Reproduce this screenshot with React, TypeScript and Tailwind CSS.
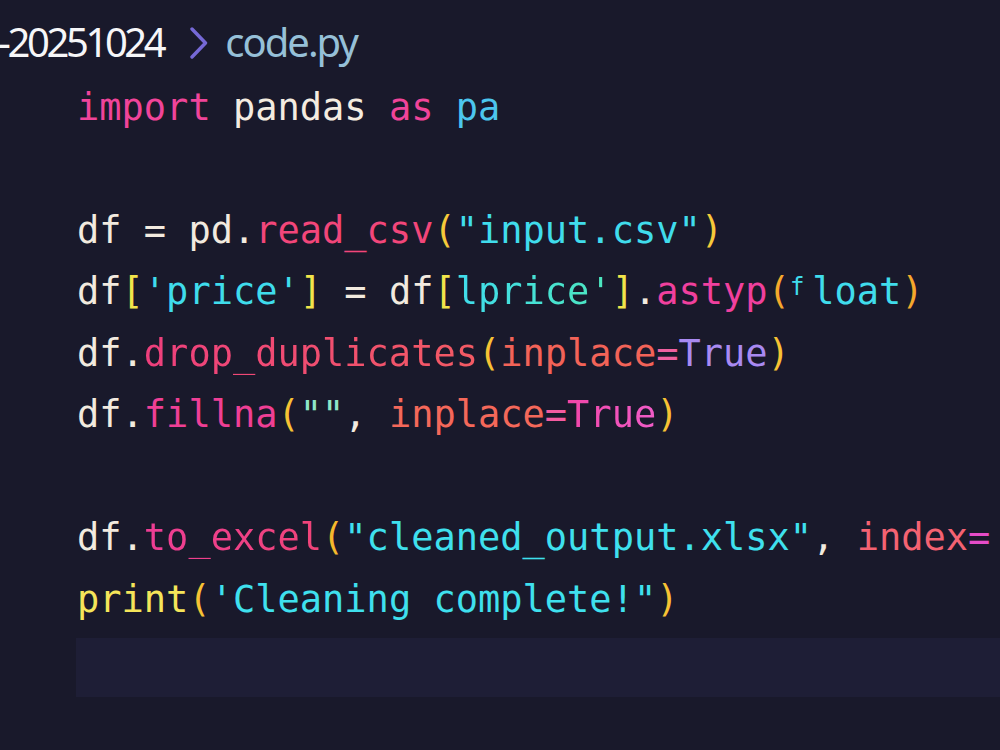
const C = {
  cream: "text-[#f2eadf]",
};

function Line({ children }: { children?: React.ReactNode }) {
  return <div className="h-[61.5px] leading-[61.5px] whitespace-pre">{children ?? " "}</div>;
}

export default function App() {
  return (
    <div className="w-[1000px] h-[750px] overflow-hidden bg-[#19192b]">
      {/* breadcrumb */}
      <div className="flex items-baseline pt-[22px] leading-[40px] font-['Noto_Sans',sans-serif] text-[40px] whitespace-nowrap -ml-[2px]">
        <span className="text-[#f6f6f8] tracking-[-0.085em]">-20251024</span>
        <svg className="ml-[26px] mr-[16px] self-center translate-y-[1px]" width="20" height="32" viewBox="0 0 20 32" fill="none">
          <polyline points="3,2 16.5,16 3,30" stroke="#7669d6" strokeWidth="3.4" strokeLinecap="round" strokeLinejoin="round" />
        </svg>
        <span className="text-[#96c0d8] tracking-[-0.05em]">code.py</span>
      </div>

      {/* code */}
      <div className="mt-[14.5px] pl-[77px] font-['DejaVu_Sans_Mono',monospace] text-[37px]">
        <Line>
          <span className="text-[#f0449a]">import</span>
          <span className="text-[#f4ece0]"> pandas </span>
          <span className="text-[#f0449a]">as</span>
          <span className="text-[#4cc6ee]"> pa</span>
        </Line>
        <Line />
        <Line>
          <span className={C.cream}>df = pd.</span>
          <span className="text-[#f2467a]">read_csv</span>
          <span className="text-[#f6c93a]">(</span>
          <span className="text-[#40dcec]">"input.csv"</span>
          <span className="text-[#f6c93a]">)</span>
        </Line>
        <Line>
          <span className={C.cream}>df</span>
          <span className="text-[#f2e44a]">[</span>
          <span className="text-[#3fdcec]">'price'</span>
          <span className="text-[#f2e44a]">]</span>
          <span className={C.cream}> = df</span>
          <span className="text-[#f2e44a]">[</span>
          <span className="bg-gradient-to-r from-[#40dcec] to-[#4ee6bc] bg-clip-text text-transparent">lprice'</span>
          <span className="text-[#f2e44a]">]</span>
          <span className={C.cream}>.</span>
          <span className="text-[#f0409e]">astyp</span>
          <span className="text-[#f5a82c]">(</span>
          <span className="relative -top-[9px] inline-block w-[22.3px] text-[24px] leading-none text-[#40dcec]">f</span>
          <span className="text-[#40dcec]">loat</span>
          <span className="text-[#f5a82c]">)</span>
        </Line>
        <Line>
          <span className={C.cream}>df.</span>
          <span className="bg-gradient-to-r from-[#ee3f7d] to-[#f35a63] bg-clip-text text-transparent">drop_duplicates</span>
          <span className="text-[#f7c234]">(</span>
          <span className="text-[#f26358]">inplace</span>
          <span className="text-[#f060a0]">=</span>
          <span className="text-[#a98af2]">True</span>
          <span className="text-[#f7c234]">)</span>
        </Line>
        <Line>
          <span className={C.cream}>df.</span>
          <span className="text-[#ef3f95]">fillna</span>
          <span className="text-[#f7c234]">(</span>
          <span className="text-[#8ee6c8]">""</span>
          <span className={C.cream}>, </span>
          <span className="text-[#f4685a]">inplace</span>
          <span className="text-[#f45ba0]">=</span>
          <span className="bg-gradient-to-r from-[#f045a8] to-[#f15cc8] bg-clip-text text-transparent">True</span>
          <span className="text-[#f7c234]">)</span>
        </Line>
        <Line />
        <Line>
          <span className={C.cream}>df.</span>
          <span className="bg-gradient-to-r from-[#ee3d95] to-[#f04478] bg-clip-text text-transparent">to_excel</span>
          <span className="text-[#f5b82c]">(</span>
          <span className="text-[#3fe0ee]">"cleaned_output.xlsx"</span>
          <span className={C.cream}>, </span>
          <span className="text-[#f46272]">index</span>
          <span className="text-[#e54cc8]">=</span>
        </Line>
        <Line>
          <span className="text-[#f5e55a]">print</span>
          <span className="text-[#f7c234]">(</span>
          <span className="text-[#3fe0ee]">'Cleaning complete!"</span>
          <span className="text-[#f7c234]">)</span>
        </Line>
        <div className="mt-[8px] -ml-px h-[59px] bg-[#1e1e36]" />
      </div>
    </div>
  );
}
